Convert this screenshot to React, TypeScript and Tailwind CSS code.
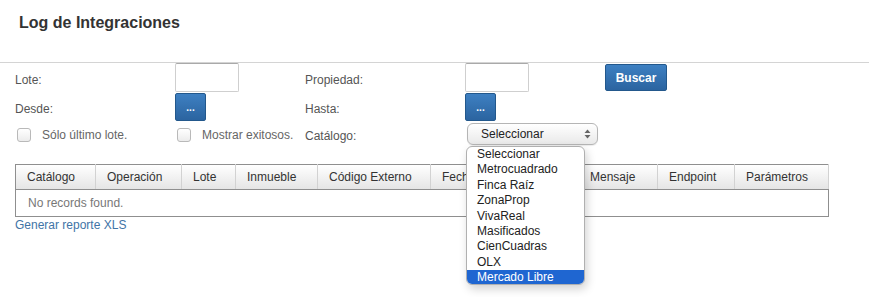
import React from "react";

const font = { fontFamily: '"Liberation Sans", Arial, sans-serif' };

function Checkbox() {
  return (
    <span className="inline-block w-[14px] h-[14px] rounded-[3px] border border-[#b9b9b9] bg-gradient-to-b from-white to-[#ececec] shrink-0" />
  );
}

function DotsButton() {
  return (
    <button className="w-[31px] h-[28px] rounded-[2px] border border-[#23588c] bg-gradient-to-b from-[#3e80c2] to-[#2b64a0] text-white text-[10px] font-bold leading-none flex items-center justify-center pt-[2px]">
      ...
    </button>
  );
}

const options = [
  "Seleccionar",
  "Metrocuadrado",
  "Finca Raíz",
  "ZonaProp",
  "VivaReal",
  "Masificados",
  "CienCuadras",
  "OLX",
  "Mercado Libre",
];

const cols: [string, number][] = [
  ["Catálogo", 80],
  ["Operación", 86],
  ["Lote", 54],
  ["Inmueble", 82],
  ["Código Externo", 113],
  ["Fecha", 148],
  ["Mensaje", 79],
  ["Endpoint", 77],
  ["Parámetros", 94],
];

export default function App() {
  return (
    <div className="w-[869px] h-[297px] bg-white text-[#444] overflow-hidden" style={font}>
      <div className="h-[63px] border-b border-[#d4d4d4] pl-[19px] pt-[13px]">
        <h1 className="text-[16px] leading-[20px] font-bold text-[#333]">Log de Integraciones</h1>
      </div>

      <div className="pl-[15px] grid grid-cols-[160px_130px_160px_140px_80px] text-[12px] text-[#555]">
        {/* row 1 */}
        <div className="h-[30px] flex items-center pt-[3px]">Lote:</div>
        <div className="h-[30px] flex items-start">
          <input className="w-[64px] h-[29px] border border-[#cfcfcf] border-t-[#a9a9a9] rounded-[2px] bg-white" />
        </div>
        <div className="h-[30px] flex items-center pt-[3px]">Propiedad:</div>
        <div className="h-[30px] flex items-start">
          <input className="w-[64px] h-[29px] border border-[#cfcfcf] border-t-[#a9a9a9] rounded-[2px] bg-white" />
        </div>
        <div className="h-[30px] flex items-start pt-[1px]">
          <button className="w-[62px] h-[27px] rounded-[2px] border border-[#23588c] bg-gradient-to-b from-[#3e80c2] to-[#2b64a0] text-white text-[12px] font-bold">
            Buscar
          </button>
        </div>

        {/* row 2 */}
        <div className="h-[29px] flex items-center pt-[3px]">Desde:</div>
        <div className="h-[29px] flex items-start">
          <DotsButton />
        </div>
        <div className="h-[29px] flex items-center pt-[3px]">Hasta:</div>
        <div className="h-[29px] flex items-start">
          <DotsButton />
        </div>
        <div className="h-[29px]" />

        {/* row 3 */}
        <div className="h-[24px] flex items-center gap-[11px] pl-[2px] pt-[1px]">
          <Checkbox />
          <span className="text-[#666]">Sólo último lote.</span>
        </div>
        <div className="h-[24px] flex items-center gap-[11px] pl-[2px] pt-[1px]">
          <Checkbox />
          <span className="text-[#666]">Mostrar exitosos.</span>
        </div>
        <div className="h-[24px] flex items-center pt-[3px]">Catálogo:</div>
        <div className="h-[24px] flex items-start pl-[2px] pt-[1px] relative">
          <div className="w-[131px] h-[22px] rounded-[6px] border border-[#b5b5b5] bg-gradient-to-b from-white to-[#e9e9e9] flex items-center justify-between pl-[13px] pr-[6px] text-[#222] shadow-[0_1px_1px_rgba(0,0,0,0.08)]">
            <span>Seleccionar</span>
            <svg width="7" height="10" viewBox="0 0 7 10">
              <path d="M3.5 0.5 L6.5 4 L0.5 4 Z" fill="#666" />
              <path d="M3.5 9.5 L6.5 6 L0.5 6 Z" fill="#666" />
            </svg>
          </div>
          <div className="absolute left-[1px] top-[24px] z-10 w-[119px] h-[139px] rounded-[6px] border border-[#b0b0b0] bg-white shadow-[2px_4px_10px_rgba(0,0,0,0.18)] overflow-hidden text-[12px] text-[#222]">
            {options.map((o, i) => (
              <div
                key={o}
                className={
                  i === options.length - 1
                    ? "h-[15.4px] leading-[14px] pl-[10px] bg-[#1f66d1] text-white"
                    : "h-[15.4px] leading-[14px] pl-[10px]"
                }
              >
                {o}
              </div>
            ))}
          </div>
        </div>
        <div className="h-[24px]" />
      </div>

      <div className="pl-[15px] pt-[18px]">
        <table className="table-fixed border-collapse border border-[#8f8f8f] w-[813px] text-[12px]">
          <colgroup>
            {cols.map(([n, w]) => (
              <col key={n} style={{ width: w }} />
            ))}
          </colgroup>
          <thead>
            <tr className="h-[25px] bg-gradient-to-b from-white to-[#e4e4e4]">
              {cols.map(([n]) => (
                <th
                  key={n}
                  className="text-left font-normal text-[#333] pl-[11px] border-r border-[#d2d2d2] border-b border-b-[#8f8f8f] whitespace-nowrap"
                >
                  {n}
                </th>
              ))}
            </tr>
          </thead>
          <tbody>
            <tr className="h-[27px]">
              <td colSpan={cols.length} className="pl-[12px] text-[#777]">
                No records found.
              </td>
            </tr>
          </tbody>
        </table>
        <div className="text-[12px] leading-[14px] pt-[1px] text-[#3f74a6]">Generar reporte XLS</div>
      </div>
    </div>
  );
}
